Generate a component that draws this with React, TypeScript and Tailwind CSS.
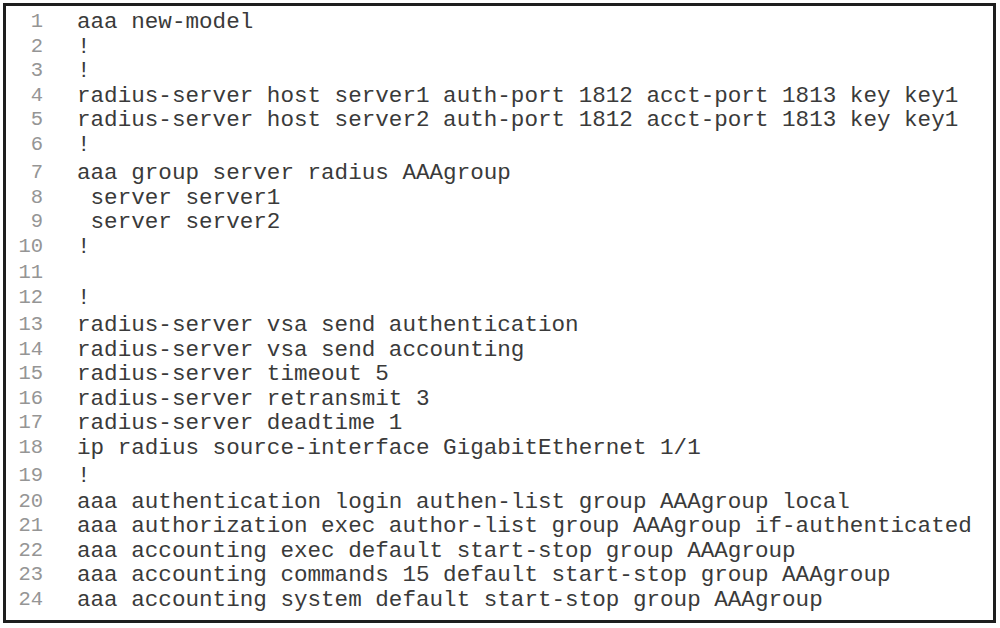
import React from "react";

type Row = { n: number; text: string; extra: string };

const rows: Row[] = [
  { n: 1, text: "aaa new-model", extra: "" },
  { n: 2, text: "!", extra: "" },
  { n: 3, text: "!", extra: "" },
  { n: 4, text: "radius-server host server1 auth-port 1812 acct-port 1813 key key1", extra: "" },
  { n: 5, text: "radius-server host server2 auth-port 1812 acct-port 1813 key key1", extra: "" },
  { n: 6, text: "!", extra: "" },
  { n: 7, text: "aaa group server radius AAAgroup", extra: "mt-[4px]" },
  { n: 8, text: " server server1", extra: "" },
  { n: 9, text: " server server2", extra: "" },
  { n: 10, text: "!", extra: "" },
  { n: 11, text: "", extra: "mt-[2px]" },
  { n: 12, text: "!", extra: "" },
  { n: 13, text: "radius-server vsa send authentication", extra: "mt-[3px]" },
  { n: 14, text: "radius-server vsa send accounting", extra: "" },
  { n: 15, text: "radius-server timeout 5", extra: "" },
  { n: 16, text: "radius-server retransmit 3", extra: "" },
  { n: 17, text: "radius-server deadtime 1", extra: "" },
  { n: 18, text: "ip radius source-interface GigabitEthernet 1/1", extra: "" },
  { n: 19, text: "!", extra: "mt-[4px]" },
  { n: 20, text: "aaa authentication login authen-list group AAAgroup local", extra: "mt-[1px]" },
  { n: 21, text: "aaa authorization exec author-list group AAAgroup if-authenticated", extra: "" },
  { n: 22, text: "aaa accounting exec default start-stop group AAAgroup", extra: "" },
  { n: 23, text: "aaa accounting commands 15 default start-stop group AAAgroup", extra: "" },
  { n: 24, text: "aaa accounting system default start-stop group AAAgroup", extra: "" },
];

export default function App() {
  return (
    <div className="w-[1000px] h-[628px] bg-white pl-[3px] pt-[3px]">
      <div className="w-[993px] h-[620px] border-[3px] border-[#1e1e1e] bg-white pt-[4px]">
        {rows.map((r) => (
          <div key={r.n} className={`flex items-center h-[24.5px] ${r.extra}`}>
            <div
              className="w-[37px] text-right text-[20.5px] leading-[24.5px] text-[#959595]"
              style={{ fontFamily: '"Liberation Mono", "Courier New", monospace' }}
            >
              {r.n}
            </div>
            <div
              className="ml-[34px] whitespace-pre text-[22.6px] leading-[24.5px] text-[#3a3a3a]"
              style={{ fontFamily: '"Liberation Mono", "Courier New", monospace' }}
            >
              {r.text}
            </div>
          </div>
        ))}
      </div>
    </div>
  );
}
